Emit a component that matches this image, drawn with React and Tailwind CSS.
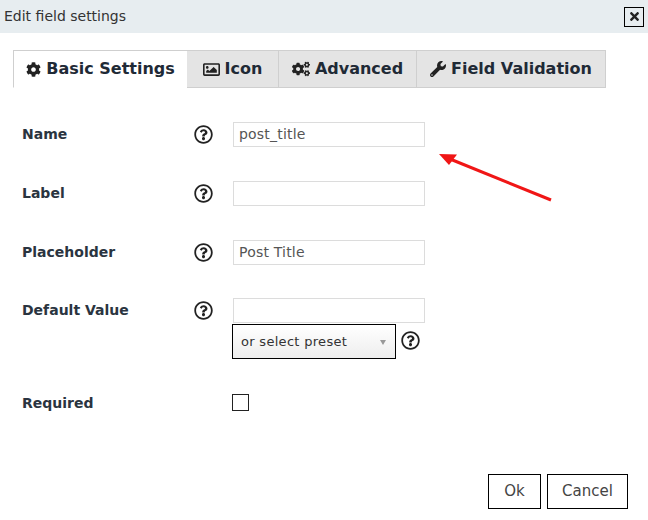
import React from 'react'
import { FaCog, FaCogs, FaRegImage, FaRegQuestionCircle, FaTimes, FaWrench } from 'react-icons/fa'

const tabs = [
  { name: 'Basic Settings', icon: FaCog, iconSize: 'text-[15px]', width: 'w-[174px]', active: true },
  { name: 'Icon', icon: FaRegImage, iconSize: 'text-[17px]', width: 'w-[92px]' },
  { name: 'Advanced', icon: FaCogs, iconSize: 'text-[18px]', width: 'w-[138px]' },
  { name: 'Field Validation', icon: FaWrench, iconSize: 'text-[16px]', width: 'w-[189px]' },
]

const Help = () => <FaRegQuestionCircle className="text-[19px] text-[#222]" />

const Row = ({ label, value, className, children }) => {
  return (
    <div className={`flex items-start ${className}`}>
      <div className="w-[172px] pt-[3px] text-[14px] leading-[18px] font-bold text-[#2a3440]">{label}</div>
      <div className="w-[39px] pt-[3px]"><Help /></div>
      <div className="flex flex-col">
        <div className="w-[192px] h-[25px] border border-[#dcdcdc] px-[5px] text-[14px] tracking-[0.2px] leading-[23px] text-[#555]">{value}</div>
        {children}
      </div>
    </div>
  )
}

const App = () => {
  return (
    <div className="relative w-[648px] h-[520px] bg-white overflow-hidden font-['DejaVu_Sans',sans-serif]">
      <div className="flex items-center justify-between h-[33px] bg-[#e7edf0] pl-[4px] pr-[4px]">
        <span className="text-[14px] text-[#333]">Edit field settings</span>
        <button className="flex items-center justify-center w-[20px] h-[20px] border border-black text-[13px] text-[#222]">
          <FaTimes />
        </button>
      </div>

      <div className="flex ml-[13px] mt-[17px] h-[38px]">
        {tabs.map((tab)=>{
          const Icon = tab.icon
          return (
            <div
              key={tab.name}
              className={`flex items-center justify-center gap-[5px] text-[16px] font-bold text-[#1f2a36] border-t border-r border-b border-[#cfcfcf] ${tab.width} ${tab.active ? 'bg-white border-l border-r-0 border-b-transparent' : 'bg-[#e4e4e4]'}`}
            >
              <Icon className={`${tab.iconSize} text-[#222]`} />
              <span>{tab.name}</span>
            </div>
          )
        })}
      </div>

      <div className="pl-[22px]">
        <Row label="Name" value="post_title" className="mt-[34px]" />
        <Row label="Label" className="mt-[34px]" />
        <Row label="Placeholder" value="Post Title" className="mt-[34px]" />
        <Row label="Default Value" className="mt-[33px]">
          <div className="flex items-center mt-[1px] -ml-[1px]">
            <div className="flex items-center justify-between w-[164px] h-[35px] border border-black bg-gradient-to-b from-white to-[#eeeeee] pl-[8px] pr-[9px] pt-[1px] text-[13px] tracking-[0.3px] text-[#333]">
              <span>or select preset</span>
              <span className="w-0 h-0 border-x-[3.5px] border-x-transparent border-t-[5px] border-t-[#999]"></span>
            </div>
            <div className="ml-[5px] -mt-[2px]"><Help /></div>
          </div>
        </Row>
        <div className="flex items-center mt-[34px]">
          <div className="w-[210px] text-[14px] font-bold text-[#2a3440]">Required</div>
          <div className="w-[17px] h-[17px] mb-[2px] border border-[#222] bg-white"></div>
        </div>
      </div>

      <div className="flex justify-end gap-[6px] mt-[60px] pr-[20px]">
        <button className="w-[53px] h-[35px] border border-black text-[15px] text-[#444]">Ok</button>
        <button className="w-[81px] h-[35px] border border-black text-[15px] text-[#444]">Cancel</button>
      </div>

      <svg className="absolute left-[436px] top-[150px]" width="118" height="54" viewBox="0 0 118 54" fill="none">
        <path d="M115 50 L14 9" stroke="#f01616" strokeWidth="3" />
        <path d="M3 4 L21 4.5 L13 15 Z" fill="#f01616" />
      </svg>
    </div>
  )
}

export default App
